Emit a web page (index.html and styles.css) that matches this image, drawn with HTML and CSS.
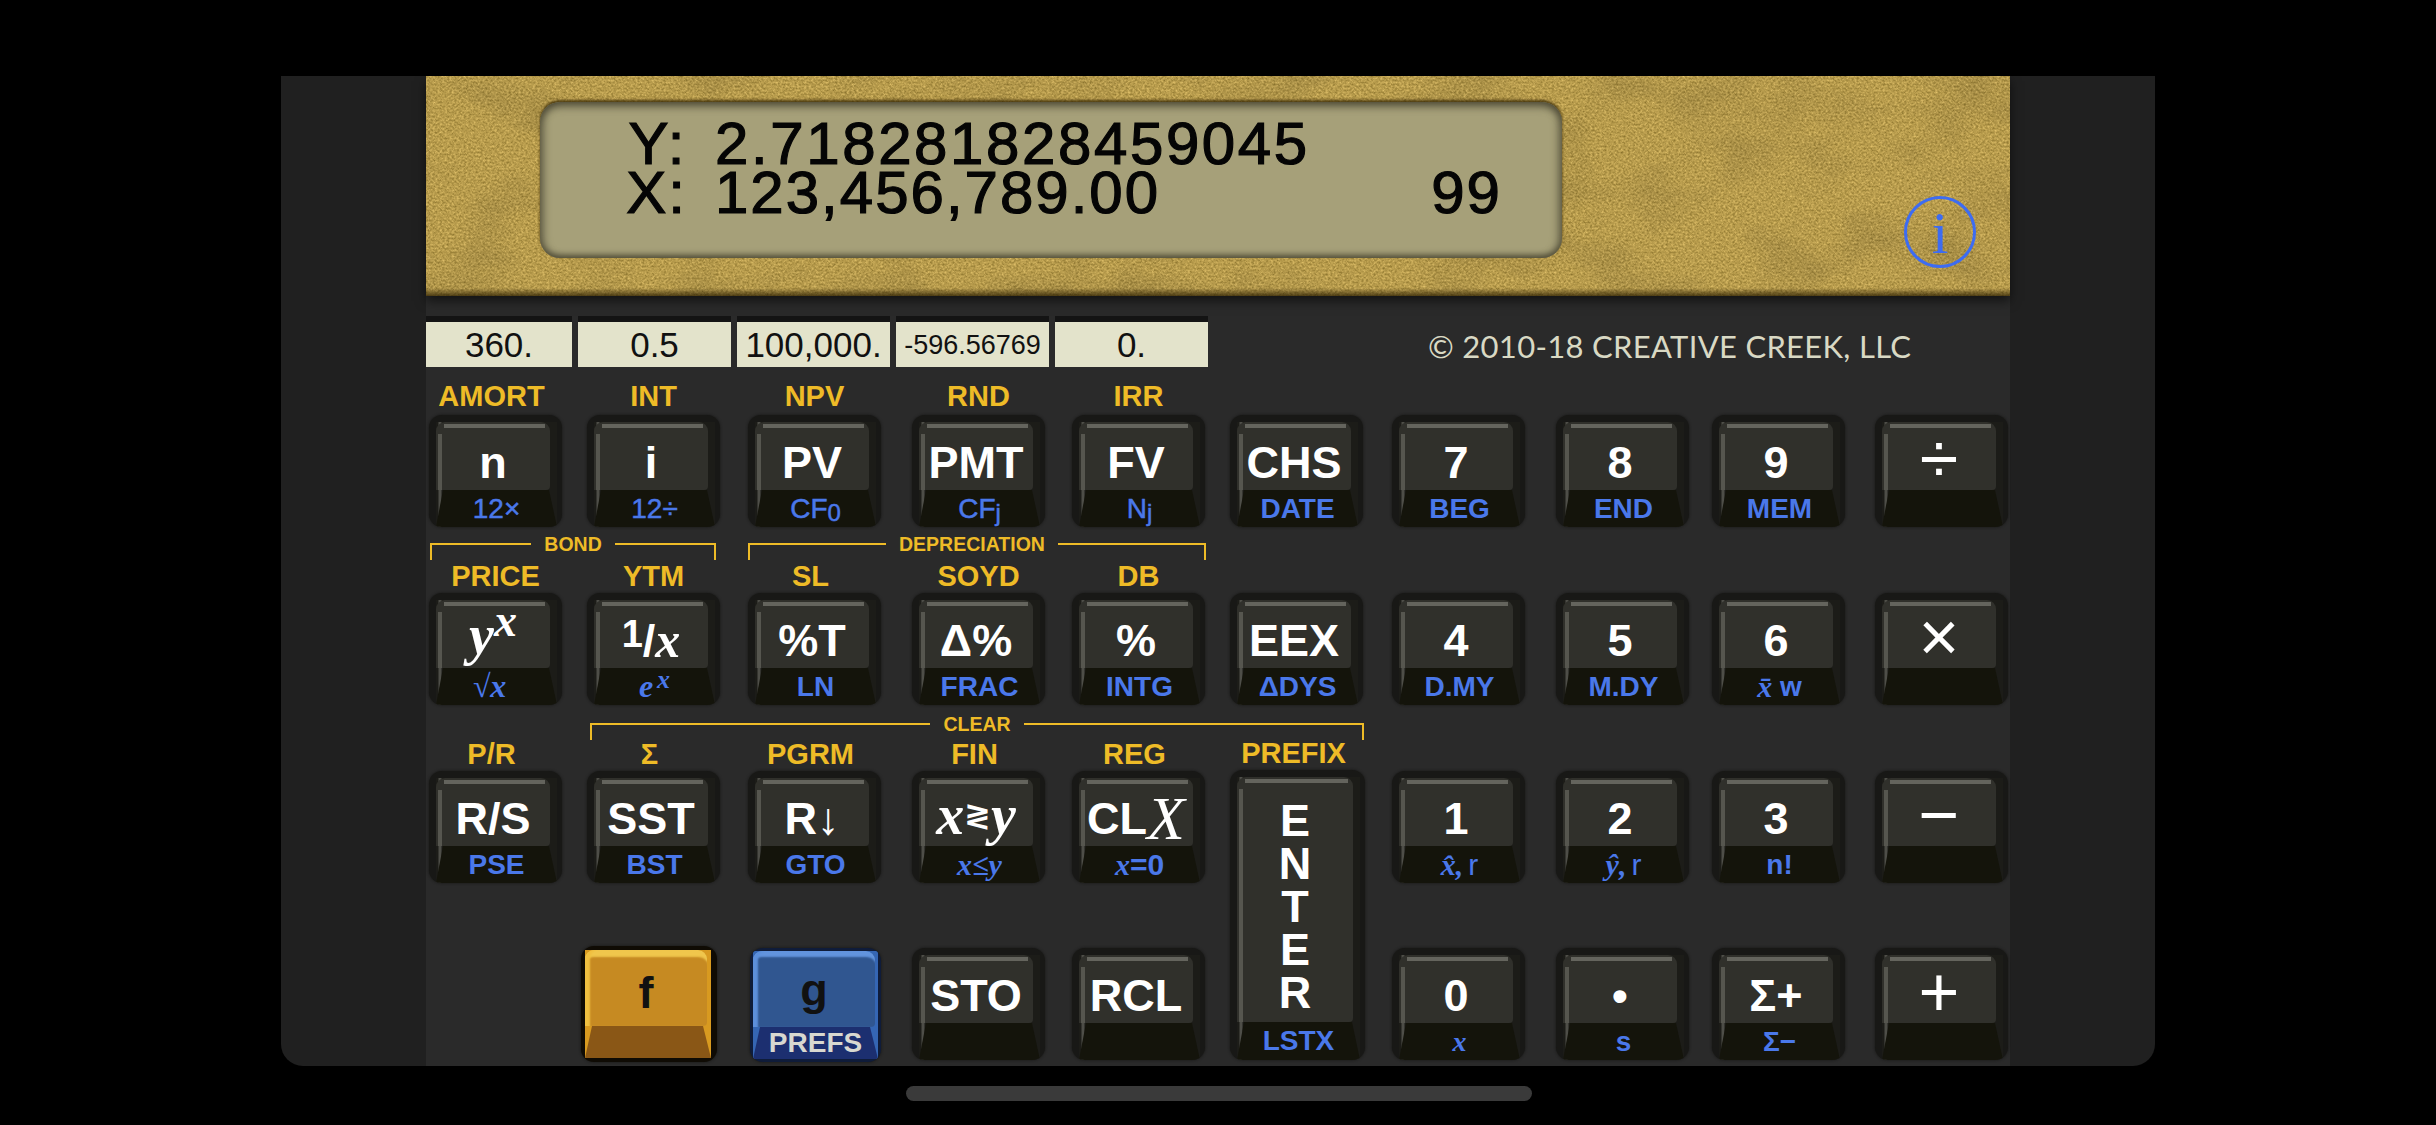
FILE: index.html
```html
<!DOCTYPE html>
<html>
<head>
    <link rel="stylesheet" href="styles.css">
</head>
<body>
    <div class="phone">
        <div class="side"></div>
        <div class="calc">
            <div class="leather">
                <svg class="grain" width="100%" height="100%">
                    <filter id="hide" x="0" y="0" width="100%" height="100%" color-interpolation-filters="sRGB">
                        <feTurbulence type="fractalNoise" baseFrequency="0.42 0.5" numOctaves="3" seed="7" result="fine"/>
                        <feColorMatrix in="fine" type="matrix" values="0.42 0 0 0 0.51  0.38 0 0 0 0.42  0.3 0 0 0 0.15  0 0 0 0 1" result="gold"/>
                        <feTurbulence type="fractalNoise" baseFrequency="0.012 0.02" numOctaves="4" seed="3"/>
                        <feColorMatrix type="matrix" values="0.25 0 0 0 0.86  0.25 0 0 0 0.86  0.25 0 0 0 0.86  0 0 0 0 1" result="mottle"/>
                        <feBlend in="gold" in2="mottle" mode="multiply"/>
                    </filter>
                    <rect width="100%" height="100%" filter="url(#hide)"/>
                </svg>
                <div class="lcd">
                    <div class="lcd-line">
                        <span class="reg-name">Y:</span>
                        <span class="reg-val">2.718281828459045</span>
                    </div>
                    <div class="lcd-line tight">
                        <span class="reg-name">X:</span>
                        <span class="reg-val">123,456,789.00</span>
                        <span class="lcd-count">99</span>
                    </div>
                </div>
                <svg class="info" width="74" height="74" viewBox="0 0 74 74">
                    <circle cx="37" cy="37" r="34.5" fill="none" stroke="#3d6cf2" stroke-width="3"/>
                    <text x="37" y="58" text-anchor="middle" font-family="Liberation Serif" font-size="60" fill="#3d6cf2">i</text>
                </svg>
            </div>

            <div class="status">
                <div class="tvm">
                    <div class="tvm-cell w1">360.</div>
                    <div class="tvm-cell">0.5</div>
                    <div class="tvm-cell">100,000.</div>
                    <div class="tvm-cell small">-596.56769</div>
                    <div class="tvm-cell">0.</div>
                </div>
                <div class="copyright">© 2010-18 CREATIVE CREEK, LLC</div>
            </div>

            <div class="keypad">
                <!-- row 1 -->
                <div class="cell top r1 k1"><div class="label shift">AMORT</div><div class="key"><div class="cap"><div class="face">n</div><div class="sub thin">12×</div></div></div></div>
                <div class="cell top r1 k2"><div class="label">INT</div><div class="key"><div class="cap"><div class="face">i</div><div class="sub thin">12÷</div></div></div></div>
                <div class="cell top r1 k3"><div class="label">NPV</div><div class="key"><div class="cap"><div class="face">PV</div><div class="sub thin">CF<span class="low">0</span></div></div></div></div>
                <div class="cell top r1 k4"><div class="label">RND</div><div class="key"><div class="cap"><div class="face">PMT</div><div class="sub thin">CF<span class="low">j</span></div></div></div></div>
                <div class="cell top r1 k5"><div class="label">IRR</div><div class="key"><div class="cap"><div class="face">FV</div><div class="sub thin">N<span class="low">j</span></div></div></div></div>
                <div class="cell r1 k6"><div class="key"><div class="cap"><div class="face">CHS</div><div class="sub">DATE</div></div></div></div>
                <div class="cell r1 k7"><div class="key"><div class="cap"><div class="face">7</div><div class="sub">BEG</div></div></div></div>
                <div class="cell r1 k8"><div class="key"><div class="cap"><div class="face">8</div><div class="sub">END</div></div></div></div>
                <div class="cell r1 k9"><div class="key"><div class="cap"><div class="face">9</div><div class="sub">MEM</div></div></div></div>
                <div class="cell r1 k10"><div class="key"><div class="cap"><div class="face op">÷</div><div class="sub"></div></div></div></div>

                <!-- row 2 -->
                <div class="bracket bond"><div class="arm l"></div><div class="bracket-text">BOND</div><div class="arm r"></div></div>
                <div class="bracket dep"><div class="arm l"></div><div class="bracket-text">DEPRECIATION</div><div class="arm r"></div></div>
                <div class="cell r2 k1"><div class="label">PRICE</div><div class="key"><div class="cap"><div class="face math"><i>y</i><sup>x</sup></div><div class="sub serif"><span class="root">√<i class="over">x</i></span></div></div></div></div>
                <div class="cell r2 k2"><div class="label">YTM</div><div class="key"><div class="cap"><div class="face"><span class="one">1</span>/<i class="mathx">x</i></div><div class="sub serif exp">e<sup>x</sup></div></div></div></div>
                <div class="cell r2 k3"><div class="label shift">SL</div><div class="key"><div class="cap"><div class="face">%T</div><div class="sub">LN</div></div></div></div>
                <div class="cell r2 k4"><div class="label">SOYD</div><div class="key"><div class="cap"><div class="face">Δ%</div><div class="sub">FRAC</div></div></div></div>
                <div class="cell r2 k5"><div class="label">DB</div><div class="key"><div class="cap"><div class="face">%</div><div class="sub">INTG</div></div></div></div>
                <div class="cell r2 k6"><div class="key"><div class="cap"><div class="face">EEX</div><div class="sub">ΔDYS</div></div></div></div>
                <div class="cell r2 k7"><div class="key"><div class="cap"><div class="face">4</div><div class="sub">D.MY</div></div></div></div>
                <div class="cell r2 k8"><div class="key"><div class="cap"><div class="face">5</div><div class="sub">M.DY</div></div></div></div>
                <div class="cell r2 k9"><div class="key"><div class="cap"><div class="face">6</div><div class="sub"><i class="mathx">x̄</i>&nbsp;w</div></div></div></div>
                <div class="cell r2 k10"><div class="key"><div class="cap"><div class="face op">×</div><div class="sub"></div></div></div></div>

                <!-- row 3 -->
                <div class="bracket clear"><div class="arm l"></div><div class="bracket-text">CLEAR</div><div class="arm r"></div></div>
                <div class="cell r3 k1"><div class="label shift">P/R</div><div class="key"><div class="cap"><div class="face">R/S</div><div class="sub">PSE</div></div></div></div>
                <div class="cell r3 k2"><div class="label shift">Σ</div><div class="key"><div class="cap"><div class="face">SST</div><div class="sub">BST</div></div></div></div>
                <div class="cell r3 k3"><div class="label shift">PGRM</div><div class="key"><div class="cap"><div class="face">R↓</div><div class="sub">GTO</div></div></div></div>
                <div class="cell r3 k4"><div class="label shift">FIN</div><div class="key"><div class="cap"><div class="face math swap"><i>x</i><span class="swap-sign">≷</span><i>y</i></div><div class="sub serif wide-sub"><i>x</i>≤<i>y</i></div></div></div></div>
                <div class="cell r3 k5"><div class="label shift">REG</div><div class="key"><div class="cap"><div class="face">CL<i class="script">X</i></div><div class="sub wide-sub"><i class="mathx">x</i>=0</div></div></div></div>
                <div class="cell enter-cell"><div class="label shift">PREFIX</div><div class="key enter"><div class="cap"><div class="face enter-face"><span>E</span><span>N</span><span>T</span><span>E</span><span>R</span></div><div class="sub">LSTX</div></div></div></div>
                <div class="cell r3 k7"><div class="key"><div class="cap"><div class="face">1</div><div class="sub serif wide-sub"><i>x̂</i>,<span class="thin-r">r</span></div></div></div></div>
                <div class="cell r3 k8"><div class="key"><div class="cap"><div class="face">2</div><div class="sub serif wide-sub"><i>ŷ</i>,<span class="thin-r">r</span></div></div></div></div>
                <div class="cell r3 k9"><div class="key"><div class="cap"><div class="face">3</div><div class="sub">n!</div></div></div></div>
                <div class="cell r3 k10"><div class="key"><div class="cap"><div class="face op">−</div><div class="sub"></div></div></div></div>

                <!-- row 4 -->
                <div class="cell r4 k2"><div class="key gold"><div class="cap"><div class="face">f</div><div class="sub"></div></div></div></div>
                <div class="cell r4 k3"><div class="key azure"><div class="cap"><div class="face">g</div><div class="sub">PREFS</div></div></div></div>
                <div class="cell r4 k4"><div class="key"><div class="cap"><div class="face">STO</div><div class="sub"></div></div></div></div>
                <div class="cell r4 k5"><div class="key"><div class="cap"><div class="face">RCL</div><div class="sub"></div></div></div></div>
                <div class="cell r4 k7"><div class="key"><div class="cap"><div class="face">0</div><div class="sub serif"><i>x</i></div></div></div></div>
                <div class="cell r4 k8"><div class="key"><div class="cap"><div class="face">•</div><div class="sub">s</div></div></div></div>
                <div class="cell r4 k9"><div class="key"><div class="cap"><div class="face">Σ+</div><div class="sub">Σ−</div></div></div></div>
                <div class="cell r4 k10"><div class="key"><div class="cap"><div class="face op">+</div><div class="sub"></div></div></div></div>
            </div>
        </div>
        <div class="side"></div>
    </div>
    <div class="home-bar"></div>
</body>
</html>
```

FILE: styles.css
```css
body {
    margin: 0;
    height: 1125px;
    overflow: hidden;
    background: #000;
    font-family: "Liberation Sans", Arial, sans-serif;
}

.phone {
    display: flex;
    width: 1874px;
    height: 990px;
    margin: 76px 0 0 281px;
    border-radius: 0 0 22px 22px;
    overflow: hidden;
    background: #202020;
}

.side {
    width: 145px;
    flex: none;
}

.calc {
    width: 1584px;
    flex: none;
    background: #2a2a2a;
}

/* leather band with the display */
.leather {
    position: relative;
    display: flex;
    align-items: flex-start;
    height: 220px;
    box-shadow: 0 5px 10px rgba(0,0,0,0.55);
}

.grain {
    position: absolute;
    left: 0;
    top: 0;
}

.leather::after {
    content: "";
    position: absolute;
    left: 0;
    right: 0;
    bottom: 0;
    height: 8px;
    background: linear-gradient(rgba(40,28,0,0), rgba(40,28,0,0.75));
}

.lcd {
    position: relative;
    width: 1022px;
    height: 156px;
    margin: 26px 0 0 114px;
    padding-top: 17px;
    box-sizing: border-box;
    border-radius: 20px;
    background: #a6a079;
    box-shadow: 0 -2px 3px rgba(50,35,0,0.8), inset 0 9px 8px -5px #4e4a36, inset 9px 0 8px -6px #5a563f, inset -9px 0 8px -6px #5a563f, inset 0 -9px 6px -6px #4e4a36;
    color: #050505;
}

.lcd-line {
    display: flex;
    height: 49px;
    font-size: 60px;
    line-height: 49px;
    letter-spacing: 2.6px;
    -webkit-text-stroke: 1.2px #050505;
}

.lcd-line.tight {
    letter-spacing: 2px;
}

.reg-name {
    width: 147px;
    text-align: right;
}

.reg-val {
    margin-left: 28px;
}

.lcd-count {
    margin-left: auto;
    margin-right: 60px;
}

.info {
    position: relative;
    margin: 119px 0 0 341px;
}

/* register strip */
.status {
    display: flex;
    align-items: center;
    margin-top: 20px;
}

.tvm {
    display: flex;
    gap: 6px;
}

.tvm-cell {
    width: 153px;
    height: 45px;
    border-top: 6px solid #141414;
    background: #e3e3cb;
    color: #111;
    font-size: 35px;
    line-height: 46px;
    text-align: center;
}

.tvm-cell.w1 {
    width: 146px;
}

.tvm-cell.small {
    font-size: 27px;
}

.copyright {
    margin-left: 220px;
    padding-top: 8px;
    font-family: "Lato", sans-serif;
    font-size: 31px;
    letter-spacing: 0.3px;
    color: #d9d9c4;
    white-space: nowrap;
}

/* keys */
.keypad {
    display: grid;
    grid-template-columns: 158px 161px 164px 160px 158px 162px 164px 156px 163px 133px;
    grid-template-rows: 160px 178px 178px 177px;
    padding-left: 3px;
}

.r1 { grid-row: 1; }
.r2 { grid-row: 2; }
.r3 { grid-row: 3; }
.r4 { grid-row: 4; }

.k1 { grid-column: 1; }
.k2 { grid-column: 2; }
.k3 { grid-column: 3; }
.k4 { grid-column: 4; }
.k5 { grid-column: 5; }
.k6 { grid-column: 6; }
.k7 { grid-column: 7; }
.k8 { grid-column: 8; }
.k9 { grid-column: 9; }
.k10 { grid-column: 10; }

.cell {
    display: flex;
    flex-direction: column;
    justify-content: flex-end;
    width: 133px;
}

.enter-cell {
    grid-column: 6;
    grid-row: 3 / span 2;
    width: 135px;
}

.label {
    margin-bottom: 2px;
    color: #eebb27;
    font-size: 29px;
    font-weight: bold;
    line-height: 29px;
    text-align: center;
}

.top .label {
    margin-bottom: 4px;
}

.label.shift {
    padding-right: 8px;
}

.key {
    display: flex;
    height: 112px;
    padding: 7px 5px 0 7px;
    box-sizing: border-box;
    border-radius: 13px;
    overflow: hidden;
    background: #181816;
    box-shadow: 0 0 3px #141412;
}

.key.enter {
    height: 290px;
}

.cap {
    display: flex;
    flex-direction: column;
    flex: 1;
    min-width: 0;
    background: linear-gradient(90deg, #1c1c18 0, #1c1c18 2px, #4e4e48 3px, #4e4e48 5px, #1c1c18 6px);
}

.face {
    display: flex;
    justify-content: center;
    align-items: center;
    height: 68px;
    margin-right: 7px;
    padding-top: 12px;
    box-sizing: border-box;
    border-radius: 9px 9px 4px 0;
    background:
        linear-gradient(#64645d, #64645d) 8px 2px / calc(100% - 13px) 4px no-repeat,
        linear-gradient(#56564f, #56564f) 2px 12px / 4px 100% no-repeat,
        #30302b;
    color: #fff;
    font-size: 45px;
    font-weight: bold;
    line-height: 45px;
    white-space: nowrap;
}

.sub {
    display: flex;
    justify-content: center;
    align-items: center;
    flex: 1;
    background: #14140b;
    clip-path: polygon(7px 0, calc(100% - 8px) 0, 100% 100%, 0 100%);
    color: #4a78ea;
    font-size: 28px;
    font-weight: bold;
    white-space: nowrap;
}

.sub.thin {
    font-weight: normal;
    -webkit-text-stroke: 0.5px #4a78ea;
}

.low {
    position: relative;
    top: 4px;
    font-size: 24px;
}

.face.op {
    font-size: 70px;
    font-weight: normal;
    line-height: 70px;
    padding-top: 6px;
}

.math, .serif, .mathx, .script {
    font-family: "Liberation Serif", serif;
}

.math {
    padding-top: 2px;
    font-size: 56px;
    font-style: italic;
}

.math sup {
    position: relative;
    top: -14px;
    font-size: 46px;
    line-height: 0;
    vertical-align: baseline;
}

.mathx {
    font-size: 50px;
}

.one {
    position: relative;
    top: -6px;
    font-size: 38px;
}

.script {
    font-weight: normal;
    font-size: 62px;
}

.swap {
    padding-top: 6px;
    font-size: 56px;
}

.swap-sign {
    font-family: "DejaVu Sans", sans-serif;
    font-size: 32px;
    font-style: normal;
}

.serif {
    font-style: italic;
}

.exp {
    font-size: 32px;
}

.sub sup {
    position: relative;
    top: -7px;
    margin-left: 4px;
    font-size: 26px;
    line-height: 0;
    vertical-align: baseline;
}

.root {
    margin-right: 14px;
    font-size: 32px;
}

.wide-sub {
    font-size: 30px;
}

.wide-sub .mathx {
    font-size: 30px;
}

.sub .mathx {
    font-size: 30px;
}

.over {
    border-top: 2px solid #4a78ea;
    line-height: 26px;
}

.thin-r {
    margin-left: 5px;
    font-family: "Liberation Sans", sans-serif;
    font-style: normal;
    font-weight: normal;
}

/* ENTER is written down the key */
.enter .face {
    flex-direction: column;
    height: 245px;
    padding-top: 14px;
    line-height: 43px;
}

/* shift keys */
.key.gold {
    height: 116px;
    width: 136px;
    margin: 0 0 -2px -6px;
    padding: 4px 6px 4px 4px;
    background: #0f0b04;
}

.gold .cap {
    background: #d89a20;
}

.gold .face {
    height: 76px;
    margin-right: 4px;
    padding-top: 8px;
    background: #c68a22;
    box-shadow: inset 6px 0 2px -1px #f0c040, inset 0 9px 2px -2px #f0c64c;
    color: #111;
}

.gold .sub {
    background: #8a5716;
}

.key.azure {
    height: 114px;
    margin: 0 0 -2px 2px;
    padding: 3px;
    background: #0f1c3a;
}

.azure .cap {
    background: #3566b4;
}

.azure .face {
    height: 76px;
    margin-right: 3px;
    padding-top: 0;
    background: #305690;
    box-shadow: inset 6px 0 2px -1px #5c8fdc, inset 0 8px 2px -2px #6294de;
    color: #111;
}

.azure .sub {
    background: #1c2f70;
    color: #d8d8d0;
}

/* brace lines over groups of keys */
.bracket {
    display: flex;
    align-self: start;
    color: #eebb27;
}

.arm {
    flex: 1;
    height: 15px;
    border-top: 2px solid #eebb27;
}

.arm.l {
    border-left: 2px solid #eebb27;
}

.arm.r {
    border-right: 2px solid #eebb27;
}

.bracket-text {
    margin-top: -8px;
    padding: 0 13px;
    font-size: 19.5px;
    font-weight: bold;
    line-height: 18px;
}

.bond {
    grid-column: 1 / span 2;
    grid-row: 2;
    width: 286px;
    margin: 16px 0 0 1px;
}

.dep {
    grid-column: 3 / span 3;
    grid-row: 2;
    width: 458px;
    margin-top: 16px;
}

.dep .arm.l {
    flex: none;
    width: 136px;
}

.clear {
    grid-column: 2 / span 5;
    grid-row: 3;
    width: 774px;
    margin: 18px 0 0 3px;
}

.home-bar {
    width: 626px;
    height: 15px;
    margin: 20px 0 0 906px;
    border-radius: 8px;
    background: #3a3a3a;
}
```
